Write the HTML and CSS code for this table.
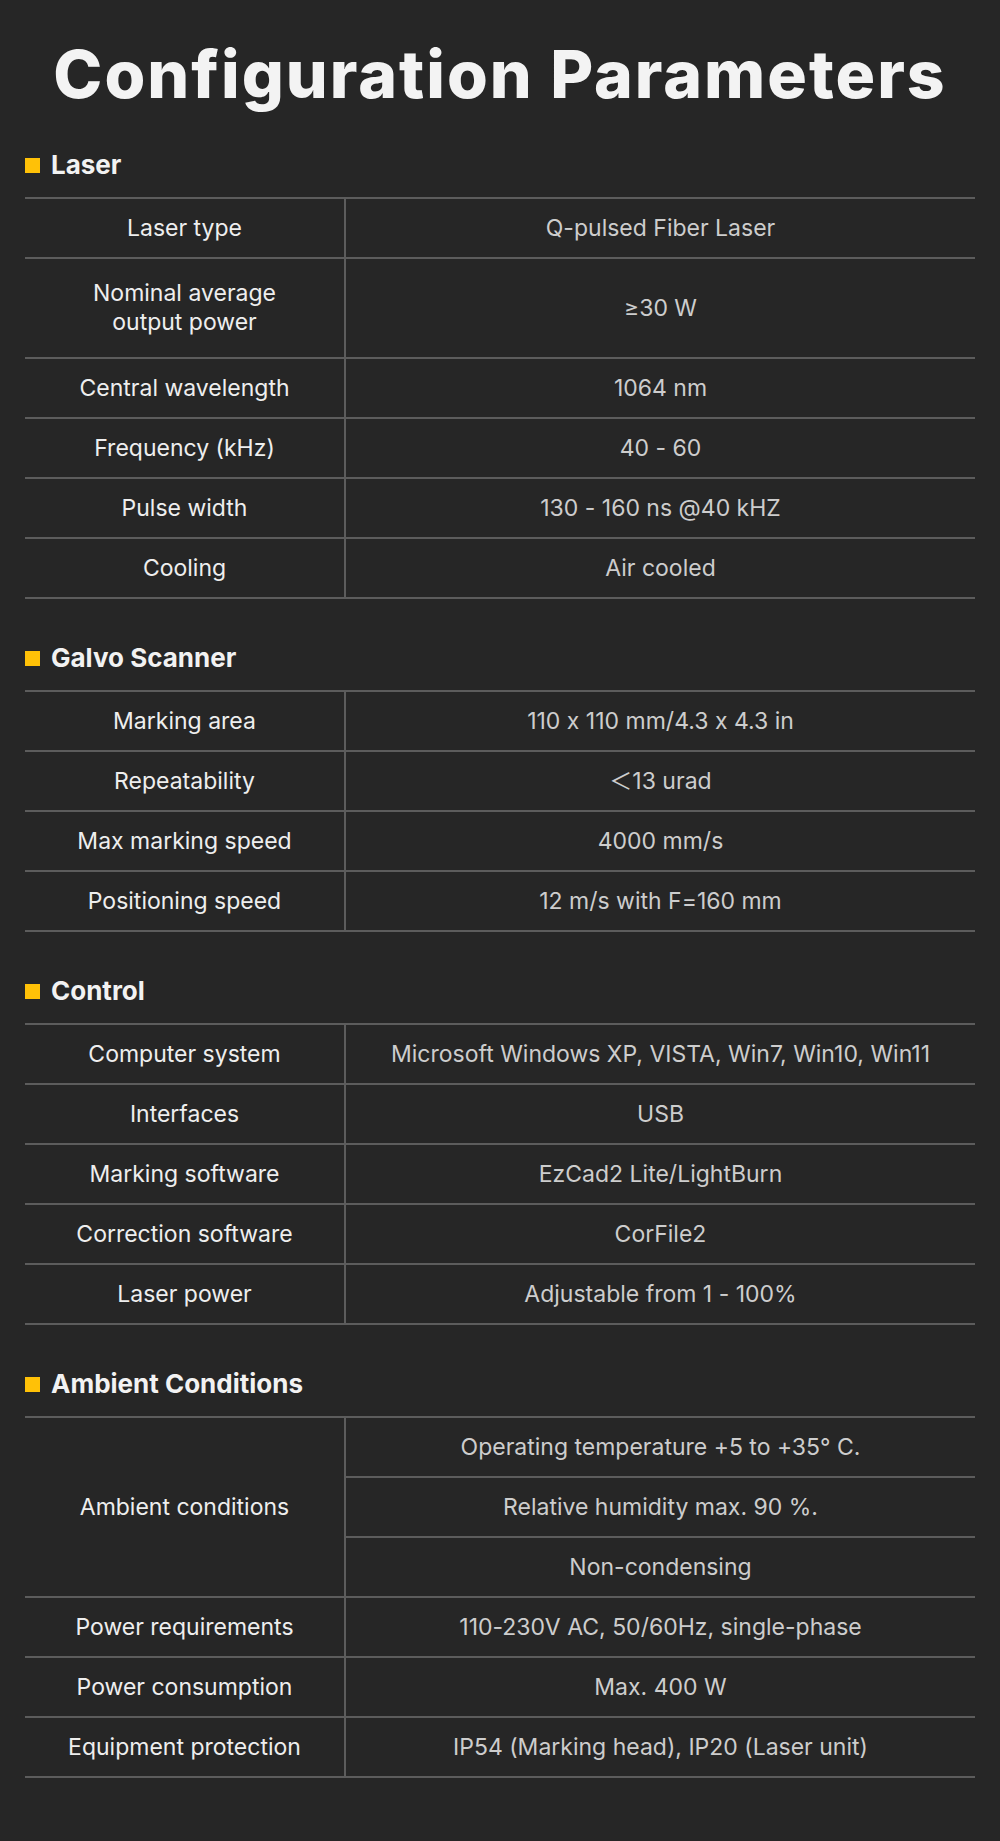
FILE: index.html
```html
<!DOCTYPE html>
<html lang="en">
<head>
<meta charset="utf-8">
<title>Configuration Parameters</title>
<link rel="stylesheet" href="styles.css">
</head>
<body>
<main class="page">
  <h1 class="title">Configuration Parameters</h1>

  <section class="section first">
    <h2 class="heading"><span class="mark"></span>Laser</h2>
    <table class="spec">
      <tr><td class="label">Laser type</td><td class="value">Q-pulsed Fiber Laser</td></tr>
      <tr class="tall"><td class="label">Nominal average<br>output power</td><td class="value">≥30 W</td></tr>
      <tr><td class="label">Central wavelength</td><td class="value">1064 nm</td></tr>
      <tr><td class="label">Frequency (kHz)</td><td class="value">40 - 60</td></tr>
      <tr><td class="label">Pulse width</td><td class="value">130 - 160 ns @40 kHZ</td></tr>
      <tr><td class="label">Cooling</td><td class="value">Air cooled</td></tr>
    </table>
  </section>

  <section class="section">
    <h2 class="heading"><span class="mark"></span>Galvo Scanner</h2>
    <table class="spec">
      <tr><td class="label">Marking area</td><td class="value">110 x 110 mm/4.3 x 4.3 in</td></tr>
      <tr><td class="label">Repeatability</td><td class="value">＜13 urad</td></tr>
      <tr><td class="label">Max marking speed</td><td class="value">4000 mm/s</td></tr>
      <tr><td class="label">Positioning speed</td><td class="value">12 m/s with F=160 mm</td></tr>
    </table>
  </section>

  <section class="section">
    <h2 class="heading"><span class="mark"></span>Control</h2>
    <table class="spec">
      <tr><td class="label">Computer system</td><td class="value">Microsoft Windows XP, VISTA, Win7, Win10, Win11</td></tr>
      <tr><td class="label">Interfaces</td><td class="value">USB</td></tr>
      <tr><td class="label">Marking software</td><td class="value">EzCad2 Lite/LightBurn</td></tr>
      <tr><td class="label">Correction software</td><td class="value">CorFile2</td></tr>
      <tr><td class="label">Laser power</td><td class="value">Adjustable from 1 - 100%</td></tr>
    </table>
  </section>

  <section class="section">
    <h2 class="heading"><span class="mark"></span>Ambient Conditions</h2>
    <table class="spec">
      <tr><td class="label" rowspan="3">Ambient conditions</td><td class="value">Operating temperature +5 to +35° C.</td></tr>
      <tr><td class="value">Relative humidity max. 90 %.</td></tr>
      <tr><td class="value">Non-condensing</td></tr>
      <tr><td class="label">Power requirements</td><td class="value">110-230V AC, 50/60Hz, single-phase</td></tr>
      <tr><td class="label">Power consumption</td><td class="value">Max. 400 W</td></tr>
      <tr><td class="label">Equipment protection</td><td class="value">IP54 (Marking head), IP20 (Laser unit)</td></tr>
    </table>
  </section>
</main>
</body>
</html>
```

FILE: styles.css
```css
* { box-sizing: border-box; }

body {
  margin: 0;
  background: #262626;
  font-family: Inter, "Noto Sans", "Noto Sans CJK SC", sans-serif;
  font-feature-settings: "calt" 0;
  color: #eeeeee;
}

.page {
  padding: 30px 25px 63px;
}

.title {
  margin: 0;
  font-size: 66px;
  line-height: 88px;
  font-weight: 800;
  text-align: center;
  color: #f3f3f3;
  letter-spacing: 2px;
}

.section {
  margin-top: 43px;
}

.section.first {
  margin-top: 31px;
}

.heading {
  display: flex;
  align-items: center;
  gap: 11px;
  margin: 0 0 16px;
  font-size: 26px;
  line-height: 32px;
  font-weight: 700;
  color: #f2f2f2;
}

.mark {
  width: 15px;
  height: 15px;
  background: #ffc107;
  flex: none;
}

.spec {
  width: 100%;
  border-collapse: collapse;
  border-top: 2px solid #5c5c5c;
  table-layout: fixed;
}

.spec td {
  height: 60px;
  border-bottom: 2px solid #5c5c5c;
  text-align: center;
  vertical-align: middle;
  font-size: 23px;
  line-height: 29px;
  padding: 0 8px;
}

.spec tr.tall td {
  height: 100px;
}

.spec .label {
  width: 320px;
  border-right: 2px solid #5c5c5c;
  color: #eeeeee;
}

.spec .value {
  color: #cdcdcd;
}
```
